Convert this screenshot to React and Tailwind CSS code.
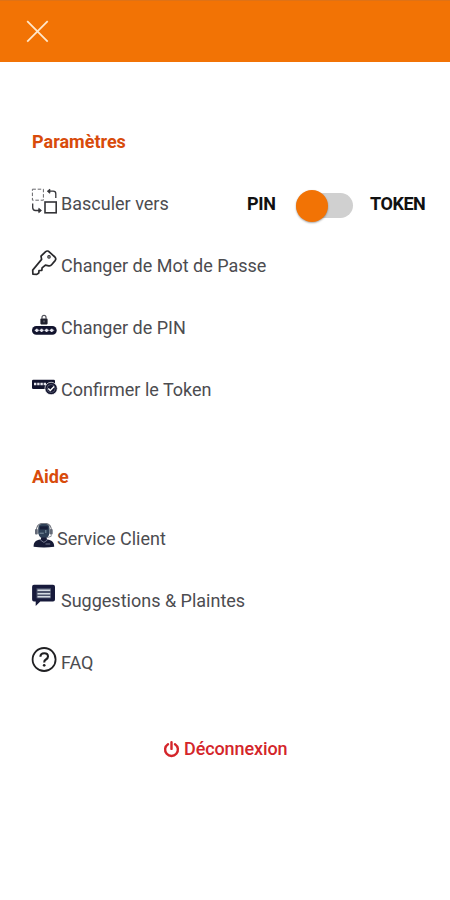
import { useState } from 'react'

function SwapIcon() {
  return (
    <svg width="27" height="32" viewBox="0 0 27 32" fill="none" stroke="#343438" className="shrink-0">
      <rect x="1.4" y="1.2" width="11" height="11" stroke="#66666a" strokeWidth="1" strokeDasharray="3.5 1.8" />
      <rect x="14" y="14" width="11.2" height="10.8" strokeWidth="1.6" />
      <path d="M18 3.2h4.2q2.6 0 2.6 2.6V10" strokeWidth="1.3" />
      <path d="M18.8 1.2L16.4 3.2l2.4 2z" fill="#343438" strokeWidth="1" />
      <path d="M1.7 15.5v4q0 3 2.8 3h4.2" strokeWidth="1.3" />
      <path d="M7.8 20.4l2.6 2.1-2.6 2.1z" fill="#343438" strokeWidth="1" />
    </svg>
  )
}

function KeyIcon() {
  return (
    <svg width="27" height="32" viewBox="0 0 27 32" fill="none" stroke="#29292c" strokeWidth="1.7" strokeLinejoin="round" className="shrink-0">
      <path d="M10.6 9.4L10 6.2 14.4 1.8q1.5-1.3 3.2-.5l6.3 5.7q1.6 1.8.2 3.6l-3.5 4.2q-1 1.3-2.8 1l-3.4-.7-3.3 2.8-.3 2.4-2.8.2-.2 2.5-2 1.4-3.9-.3-.2-4z" />
      <circle cx="18" cy="6.9" r="1.2" strokeWidth="1.2" />
    </svg>
  )
}

function PinIcon() {
  return (
    <svg width="27" height="32" viewBox="0 0 27 32" fill="none" className="shrink-0">
      <rect x="9.4" y="6.6" width="7.2" height="5.8" rx=".8" fill="#20212d" />
      <path d="M11 7V5.3a2 2 0 0 1 4 0V7" stroke="#52535c" strokeWidth="1.2" />
      <path d="M13 8.5v1.8" stroke="#888994" strokeWidth="1" />
      <rect x="1" y="14.1" width="24.7" height="8.6" rx="4.3" fill="#11132d" />
      <path d="M3.5 18.4h19.8" stroke="#777b90" strokeWidth="1" />
      <path d="M5.8 16.7v3.4M10.6 16.7v3.4M15.6 16.7v3.4M20.7 16.7v3.4M4.1 18.4h3.4M8.9 18.4h3.4M13.9 18.4h3.4M19 18.4h3.4" stroke="#e5e5ed" strokeWidth="1.6" />
    </svg>
  )
}

function TokenIcon() {
  return (
    <svg width="27" height="32" viewBox="0 0 27 32" fill="none" className="shrink-0">
      <rect x="1" y="5.7" width="23" height="9.3" rx="1.3" fill="#11132d" />
      <path d="M3 10h12" stroke="#e5e5ed" strokeWidth="2.6" strokeDasharray="2.4 .8" />
      <circle cx="20.1" cy="14.5" r="6.2" fill="#11132d" stroke="#fff" strokeWidth=".7" />
      <circle cx="20.1" cy="14.5" r="4" stroke="#777b90" strokeWidth=".6" />
      <path d="M17.3 14.6l2 2 3.8-4" stroke="#fff" strokeWidth="1.4" />
    </svg>
  )
}

function AgentIcon() {
  return (
    <svg width="27" height="32" viewBox="0 1 27 32" fill="none" className="shrink-0">
      <path d="M2.6 24.8c0-5 2.5-6.8 6.7-7.3h7c4.2.5 6.9 2.3 6.9 7.3q-10 1.4-20.6 0z" fill="#171b36" />
      <path d="M7.2 6.5q0-5.2 5.7-5.2t5.7 5.2v4.7q-1.4 5.2-5.7 5.2t-5.7-5.2z" fill="#2e4057" />
      <path d="M8.8 4.3h8v3.2h-8z" fill="#151c37" />
      <path d="M5.5 8.5q0-7.3 7.4-7.3t7.4 7.3" stroke="#777a83" strokeWidth="1.1" />
      <rect x="4" y="7" width="2.8" height="5.5" rx="1" fill="#656b78" />
      <rect x="18.9" y="7" width="2.8" height="5.5" rx="1" fill="#656b78" />
      <path d="M8.5 11.2h4.3M14.8 8v3" stroke="#8196a5" strokeWidth="1" />
      <path d="M20.2 12v2.3l-4 1.3" stroke="#8b919c" />
      <path d="M10 15.5h5.8v2.6L13 20l-3-1.9z" fill="#171b36" />
      <path d="M9.4 18l3.5 2.4 3.5-2.4M14.5 22h4.7" stroke="#8b91a5" strokeWidth=".8" />
    </svg>
  )
}

function CommentIcon() {
  return (
    <svg width="27" height="32" viewBox="0 1 27 32" fill="none" className="shrink-0 overflow-visible">
      <path d="M3 .8h19q2 0 2 2v12.8q0 2-2 2H9.3L4.7 22v-4.4H3q-1.9 0-1.9-2V2.8q0-2 1.9-2z" fill="#171a3b" />
      <rect x="5.5" y="4.2" width="14.5" height="10.2" fill="#4b526b" />
      <path d="M6.5 6.3h12.7M6.5 9.7h12.7M6.5 12.7h12.7" stroke="#d4dae2" strokeWidth="1.5" />
    </svg>
  )
}

function FaqIcon() {
  return (
    <svg width="27" height="32" viewBox="0 1 27 32" fill="none" stroke="#202023" className="shrink-0">
      <circle cx="13.1" cy="13.5" r="11.5" strokeWidth="1.8" />
      <path d="M9.4 10.8q.1-3.5 3.8-3.5 3.8 0 3.8 3.2 0 1.8-2.1 3-1.7 1-1.7 2.9" strokeWidth="2.1" />
      <circle cx="13.2" cy="19.3" r="1.35" fill="#202023" stroke="none" />
    </svg>
  )
}

function MenuItem({ icon, label, compact }) {
  return (
    <button type="button" className="flex h-[62px] items-center text-left">
      {icon}
      <span className={compact ? '-ml-px' : 'ml-[3px]'}>{label}</span>
    </button>
  )
}

export default function App() {
  const [token, setToken] = useState(false)

  return (
    <div className="min-h-screen bg-white font-['Roboto',sans-serif] text-[18px] leading-6 tracking-[0px] text-[#4c4c50]">
      <header className="flex h-[62px] items-center border-t border-[#df7216] bg-[#f27305] pl-[26px]">
        <button type="button" aria-label="Fermer">
          <svg width="23" height="23" viewBox="0 0 23 23" stroke="#ffe8cc" strokeWidth="1.8">
            <path d="M1.2 1.2l20.5 20.5M21.7 1.2L1.2 21.7" />
          </svg>
        </button>
      </header>

      <main className="pr-6 pl-[31px] pt-[49px]">
        <section className="flex flex-col">
          <h2 className="flex h-[62px] items-center pl-px font-bold text-[#d84b0b]">Paramètres</h2>

          <div className="flex h-[62px] items-center">
            <SwapIcon />
            <span className="ml-[3px] w-[186px]">Basculer vers</span>
            <span className="w-[49px] font-bold tracking-[-0.3px] text-[#111]">PIN</span>
            <button
              type="button"
              role="switch"
              aria-checked={token}
              aria-label="PIN ou TOKEN"
              onClick={() => setToken(!token)}
              className="mt-[3px] flex h-8 w-[57px] items-center"
            >
              <span className="flex h-[25px] w-full items-center rounded-full bg-[#d0d0d0]">
                <span className={`size-8 rounded-full bg-[#f27305] shadow-[0_1px_2px_rgba(0,0,0,0.35)] ${token ? 'ml-auto' : ''}`} />
              </span>
            </button>
            <span className="ml-[17px] font-bold tracking-[-0.45px] text-[#111]">TOKEN</span>
          </div>

          <MenuItem icon={<KeyIcon />} label="Changer de Mot de Passe" />
          <MenuItem icon={<PinIcon />} label="Changer de PIN" />
          <MenuItem icon={<TokenIcon />} label="Confirmer le Token" />
        </section>

        <section className="mt-[25px] flex flex-col">
          <h2 className="flex h-[62px] items-center pl-px font-bold text-[#d84b0b]">Aide</h2>
          <MenuItem icon={<AgentIcon />} label="Service Client" compact />
          <MenuItem icon={<CommentIcon />} label="Suggestions & Plaintes" />
          <MenuItem icon={<FaqIcon />} label="FAQ" />
        </section>
      </main>

      <button type="button" className="mt-[43px] ml-[163px] flex items-center gap-1 font-medium tracking-[-0.1px] text-[#d4252a]">
        <svg width="17" height="17" viewBox="0 0 17 17" fill="none" stroke="currentColor" strokeWidth="2.4" strokeLinecap="round">
          <path d="M5 3.2a6.4 6.4 0 1 0 7 0M8.5 1.3v6.6" />
        </svg>
        Déconnexion
      </button>
    </div>
  )
}
